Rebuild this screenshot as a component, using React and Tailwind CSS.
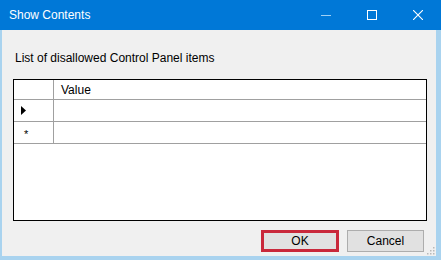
import React from "react";

const TitleButton = ({ children }) => (
  <div className="w-[46px] h-full flex items-center justify-center">{children}</div>
);

const GridRow = ({ marker }) => (
  <div className="flex h-[22px] border-b border-[#a0a0a0]">
    <div className="w-[40px] border-r border-[#a0a0a0] flex items-center pl-[7px]">
      {marker === "current" && (
        <svg width="6" height="9" viewBox="0 0 6 9">
          <path d="M0 0 L5 4.5 L0 9 Z" fill="#000" />
        </svg>
      )}
      {marker === "new" && (
        <span className="text-[11px] leading-none text-black ml-[3px] mt-[3px]">*</span>
      )}
    </div>
    <div className="flex-1 bg-white" />
  </div>
);

export default function App() {
  return (
    <div className="w-[441px] h-[260px] flex flex-col bg-[#f0f0f0] font-['Liberation_Sans',Arial,sans-serif] text-[12px] text-black overflow-hidden">
      {/* title bar */}
      <div className="h-[30px] shrink-0 bg-[#0078d7] flex items-center">
        <span className="pl-[9px] text-white text-[12px] flex-1">Show Contents</span>
        <TitleButton>
          <svg width="10" height="10" viewBox="0 0 10 10">
            <path d="M0 5.5 H10" stroke="#9fd0f5" strokeWidth="1" />
          </svg>
        </TitleButton>
        <TitleButton>
          <svg width="10" height="10" viewBox="0 0 10 10">
            <rect x="0.5" y="0.5" width="9" height="9" fill="none" stroke="#fff" strokeWidth="1" />
          </svg>
        </TitleButton>
        <TitleButton>
          <svg width="10" height="10" viewBox="0 0 10 10">
            <path d="M0 0 L10 10 M10 0 L0 10" stroke="#fff" strokeWidth="1.1" />
          </svg>
        </TitleButton>
      </div>

      {/* body */}
      <div className="flex-1 flex flex-col border-l-2 border-r-[5px] border-b-[4px] border-[#a9d3ef] pl-[11px] pr-[9px] pt-[21px] pb-[4px] relative">
        <p className="pl-[2px] leading-[14px] mb-[14px]">List of disallowed Control Panel items</p>

        <div className="h-[142px] border border-black bg-white flex flex-col">
          <div className="flex h-[20px] border-b border-[#a0a0a0]">
            <div className="w-[40px] border-r border-[#a0a0a0]" />
            <div className="flex-1 flex items-center pl-[7px]">Value</div>
          </div>
          <GridRow marker="current" />
          <GridRow marker="new" />
        </div>

        <div className="mt-[9px] flex justify-end gap-[8px] mr-[3px]">
          <button className="w-[78px] h-[22px] bg-[#e1e1e1] border-[3px] border-[#c9283b] flex items-center justify-center">
            OK
          </button>
          <button className="w-[77px] h-[22px] bg-[#e1e1e1] border border-[#adadad] flex items-center justify-center">
            Cancel
          </button>
        </div>

        <svg className="absolute right-[1px] bottom-[1px]" width="8" height="8" viewBox="0 0 8 8">
          <rect x="6" y="0" width="1.5" height="1.5" fill="#b8b8b8" />
          <rect x="3" y="3" width="1.5" height="1.5" fill="#b8b8b8" />
          <rect x="6" y="3" width="1.5" height="1.5" fill="#b8b8b8" />
          <rect x="0" y="6" width="1.5" height="1.5" fill="#b8b8b8" />
          <rect x="3" y="6" width="1.5" height="1.5" fill="#b8b8b8" />
          <rect x="6" y="6" width="1.5" height="1.5" fill="#b8b8b8" />
        </svg>
      </div>
    </div>
  );
}
